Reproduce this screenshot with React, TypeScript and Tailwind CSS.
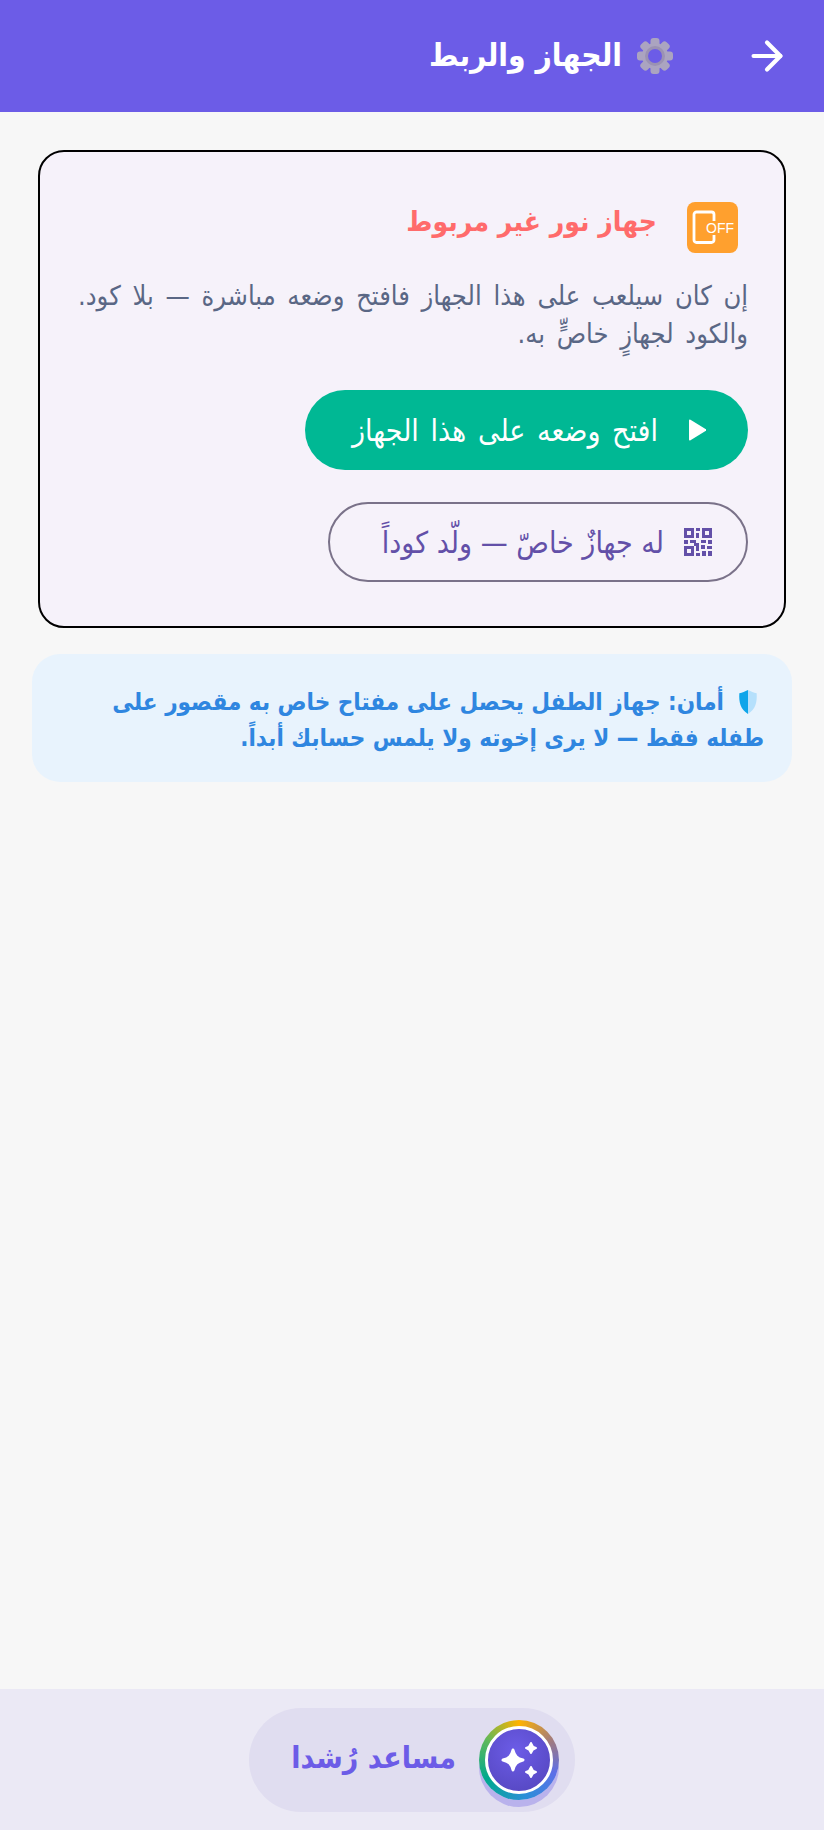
import {ArrowRight} from "lucide-react"

const Gear = () => (
    <svg width="38" height="38" viewBox="0 0 38 38" className="shrink-0">
        <g fill="#aba4c0">
            <rect x="14.500" y="1" width="9" height="36" rx="3"/>
            <rect x="14.500" y="1" width="9" height="36" rx="3" transform="rotate(45 19 19)"/>
            <rect x="14.500" y="1" width="9" height="36" rx="3" transform="rotate(90 19 19)"/>
            <rect x="14.500" y="1" width="9" height="36" rx="3" transform="rotate(135 19 19)"/>
            <circle cx="19" cy="19" r="13"/>
        </g>
        <circle cx="19" cy="19" r="10" fill="#9b92b3"/>
        <circle cx="19" cy="19" r="7" fill="#6c5ce7"/>
    </svg>
)

const OffIcon = () => (
    <div className="rounded-lg shrink-0 w-[51px] h-[51px] bg-[#ffa02e]">
        <svg width="51" height="51" viewBox="0 0 51 51" className="[direction:ltr]">
            <path d="M27 33v5a2.500 2.500 0 0 1-2.500 2.500h-15A2.500 2.500 0 0 1 7 38V12.500A2.500 2.500 0 0 1 9.500 10h15a2.500 2.500 0 0 1 2.500 2.500V19" fill="none" stroke="#fff" strokeWidth="2.800"/>
            <text x="19" y="31" fill="#fff" fontSize="14" textLength="28" lengthAdjust="spacingAndGlyphs" fontFamily="'Liberation Sans', sans-serif">OFF</text>
        </svg>
    </div>
)

const QrIcon = () => (
    <svg width="28" height="28" viewBox="0 0 28 28" fill="#6350a8" className="shrink-0">
        <path fillRule="evenodd" d="M0 0h10v10H0zM3 3v4h4V3zM18 0h10v10H18zM21 3v4h4V3zM0 18h10v10H0zM3 21v4h4v-4z"/>
        <rect x="12" y="0" width="4" height="3"/>
        <rect x="12" y="5" width="3" height="5"/>
        <rect x="0" y="12" width="4" height="4"/>
        <rect x="6" y="12" width="6" height="3"/>
        <rect x="10" y="15" width="5" height="3"/>
        <rect x="17" y="12" width="5" height="3"/>
        <rect x="24" y="12" width="4" height="4"/>
        <rect x="12" y="18" width="3" height="5"/>
        <rect x="17" y="17" width="4" height="4"/>
        <rect x="23" y="18" width="5" height="3"/>
        <rect x="18" y="23" width="4" height="5"/>
        <rect x="24" y="23" width="4" height="5"/>
        <rect x="12" y="25" width="4" height="3"/>
    </svg>
)

const Shield = () => (
    <svg width="22" height="26" viewBox="0 0 18 24" className="shrink-0 inline-block align-[-5px] mr-[5px] ml-[13px]">
        <path d="M9 1c3 1.500 5 2.500 8 3 0.500 8-1 15-8 19V1z" fill="#b5e0fc"/>
        <path d="M9 1C6 2.500 4 3.500 1 4c-.5 8 1 15 8 19V1z" fill="#0ea5ea"/>
    </svg>
)

const Sparkles = () => (
    <svg width="60" height="60" viewBox="0 0 60 60" fill="#fff" stroke="#fff" strokeLinejoin="round">
        <path d="M24 20c1.500 6 4 8.500 10 10-6 1.500-8.500 4-10 10-1.500-6-4-8.500-10-10 6-1.500 8.500-4 10-10z" strokeWidth="3"/>
        <path d="M42 13c.8 3 2 4.200 5 5-3 .8-4.200 2-5 5-.8-3-2-4.200-5-5 3-.8 4.200-2 5-5z" strokeWidth="2"/>
        <path d="M42 37c.8 3 2 4.200 5 5-3 .8-4.200 2-5 5-.8-3-2-4.200-5-5 3-.8 4.200-2 5-5z" strokeWidth="2"/>
    </svg>
)

const App = () => {
    return (
        <div dir="rtl" className="flex flex-col w-[824px] h-[1830px] bg-[#f7f7f7] font-['DejaVu_Sans_Condensed','DejaVu_Sans',sans-serif]">
            <header className="flex items-center shrink-0 h-[112px] pr-[34px] bg-[#6c5ce7] text-white">
                <ArrowRight size={46} strokeWidth={2.2}/>
                <div className="flex items-center gap-[14px] mr-[70px]">
                    <Gear/>
                    <h1 className="text-[31.5px] font-bold">الجهاز والربط</h1>
                </div>
            </header>

            <main className="flex flex-col flex-grow px-[32px] pt-[38px] gap-[26px]">
                <section className="flex flex-col items-start mx-[6px] h-[478px] pt-[50px] px-[36px] rounded-[26px] border-2 border-black bg-[#f6f2fa]">
                    <div className="flex items-start gap-[30px] mr-[10px]">
                        <OffIcon/>
                        <h2 className="text-[28px] font-bold text-[#ff6b6b] -mt-[1px]">جهاز نور غير مربوط</h2>
                    </div>
                    <p className="mt-[24px] text-[27px] leading-[38px] [word-spacing:4px] text-[#5a6785]">
                        إن كان سيلعب على هذا الجهاز فافتح وضعه مباشرة — بلا كود. والكود لجهازٍ خاصٍّ به.
                    </p>
                    <button className="flex items-center gap-[30px] mt-[37px] h-[80px] w-[443px] pr-[42px] rounded-full bg-[#00b894] text-white text-[30px] [word-spacing:3px]">
                        <svg width="18" height="22" viewBox="0 0 18 22" fill="#fff" className="shrink-0">
                            <path d="M1 1.500v19a1 1 0 0 0 1.500.8L17.500 12a1 1 0 0 0 0-2L2.500.7A1 1 0 0 0 1 1.500z"/>
                        </svg>
                        افتح وضعه على هذا الجهاز
                    </button>
                    <button className="flex items-center gap-[20px] mt-[32px] h-[80px] w-[420px] pr-[34px] rounded-full border-2 border-[#7a7289] text-[#6350a8] text-[30px]">
                        <QrIcon/>
                        له جهازٌ خاصّ — ولّد كوداً
                    </button>
                </section>

                <aside className="h-[128px] pt-[30px] pr-[28px] pl-[40px] rounded-[28px] bg-[#e8f3fd] text-[24px] font-bold leading-[36px] text-[#2f86e0]">
                    <Shield/>أمان: جهاز الطفل يحصل على مفتاح خاص به مقصور على طفله فقط — لا يرى إخوته ولا يلمس حسابك أبداً.
                </aside>
            </main>

            <footer className="flex items-center justify-center shrink-0 h-[141px] bg-[#ebe9f5]">
                <div className="flex items-center gap-[23px] w-[326px] h-[104px] pr-[16px] rounded-full bg-[#e0ddf0]">
                    <div className="shrink-0 p-[6px] w-[80px] h-[80px] rounded-full bg-[conic-gradient(from_0deg,#ffb300,#a07a80_60deg,#5c6fe8_110deg,#2b8fd8_170deg,#00a88e_240deg,#5cb85c_300deg,#ffb300)] shadow-[0_7px_0_#b9b2ec]">
                        <div className="flex items-center justify-center w-full h-full rounded-full border-[3px] border-white bg-[radial-gradient(circle_at_45%_35%,#6c5ce7,#5244bb)]">
                            <Sparkles/>
                        </div>
                    </div>
                    <span className="text-[30px] font-bold text-[#6c5ce7] -mt-[5px]">مساعد رُشدا</span>
                </div>
            </footer>
        </div>
    )
}

export default App
